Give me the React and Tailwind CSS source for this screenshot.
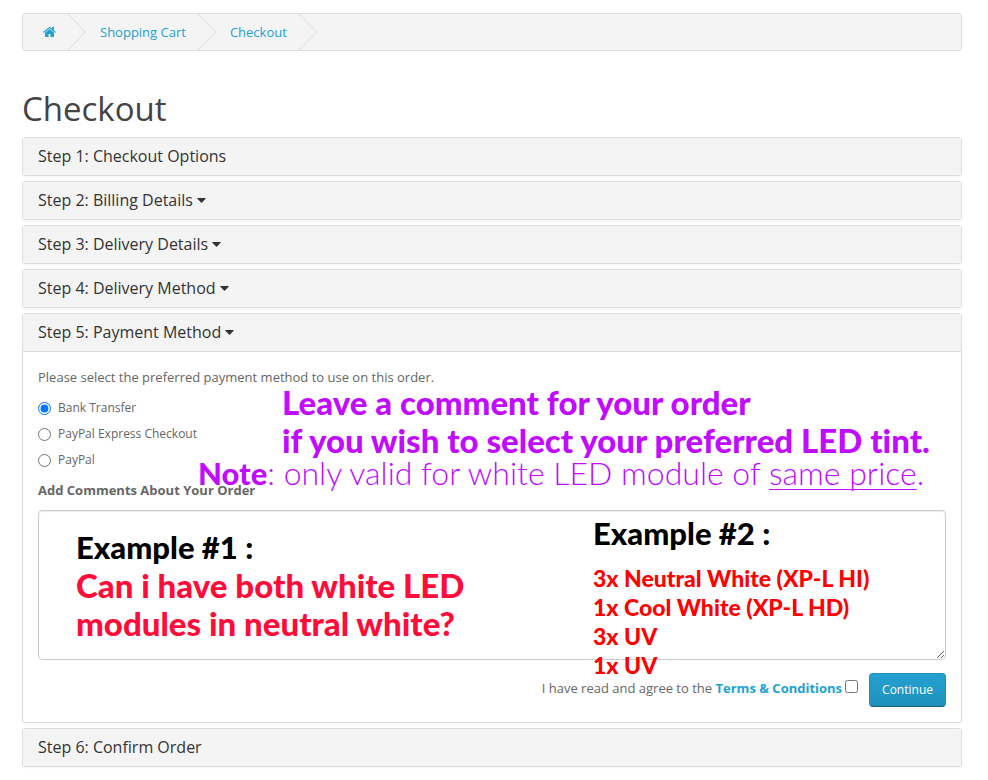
const crumbs = [
    { label: 'Home', icon: true },
    { label: 'Shopping Cart' },
    { label: 'Checkout' },
];

const paymentMethods = ['Bank Transfer', 'PayPal Express Checkout', 'PayPal'];

function HomeIcon() {
    return (
        <svg className="h-[13px] w-[13px]" viewBox="60 130 1670 1670" fill="currentColor" aria-hidden="true">
            <path d="M1472 992v480q0 26-19 45t-45 19h-384v-384h-256v384h-384q-26 0-45-19t-19-45v-480q0-1 .5-3t.5-3l575-474 575 474q1 2 1 6zm223-69l-62 74q-8 9-21 11h-3q-13 0-21-7l-692-577-692 577q-12 8-24 7-13-2-21-11l-62-74q-8-10-7-23.5t11-21.5l719-599q32-26 76-26t76 26l244 204v-195q0-14 9-23t23-9h192q14 0 23 9t9 23v408l219 182q10 8 11 21.5t-7 23.5z" />
        </svg>
    );
}

function Breadcrumb() {
    return (
        <nav className="rounded border border-[#ddd] bg-[#f4f4f4]">
            <ol className="flex gap-1 overflow-hidden">
                {crumbs.map((crumb) => (
                    <li key={crumb.label} className="relative flex h-9 items-center px-5">
                        <a href="#" aria-label={crumb.label} className="text-[13px] leading-5 text-[#23a1d1]">
                            {crumb.icon ? <HomeIcon /> : crumb.label}
                        </a>
                        <svg
                            className="absolute top-0 -right-2.5 h-9 w-[18px]"
                            viewBox="0 0 18 36"
                            fill="none"
                            stroke="#ddd"
                        >
                            <path d="M0 0 L17.5 18 L0 36" />
                        </svg>
                    </li>
                ))}
            </ol>
        </nav>
    );
}

function Panel({ title, caret, children }) {
    return (
        <section className="rounded-[3px] border border-[#ddd] bg-white shadow-xs">
            <h2 className="bg-[#f4f4f4] px-[15px] py-2.5 text-base leading-[17px] text-[#333]">
                {caret ? (
                    <a href="#" className="flex items-center gap-1">
                        {title}
                        <svg className="h-[5px] w-[9px]" viewBox="0 0 9 5" fill="currentColor" aria-hidden="true">
                            <path d="M0.6 0h7.8q.6.1.2.7L5 4.6q-.5.4-1 0L.4.7Q0 .1.6 0z" />
                        </svg>
                    </a>
                ) : (
                    title
                )}
            </h2>
            {children}
        </section>
    );
}

function PaymentForm() {
    return (
        <form className="relative border-t border-[#ddd] p-[15px] text-[13px] leading-5 text-[#666]">
            <p className="mb-[11px]">Please select the preferred payment method to use on this order.</p>

            <div className="mb-2.5 flex flex-col gap-1.5 text-xs leading-5">
                {paymentMethods.map((method, i) => (
                    <label key={method} className="flex items-center gap-[7px]">
                        <input type="radio" name="payment_method" defaultChecked={i === 0} className="size-[13px]" />
                        {method}
                    </label>
                ))}
            </div>

            <label htmlFor="comment" className="mb-2.5 block font-bold">
                Add Comments About Your Order
            </label>
            <div className="relative">
                <textarea
                    id="comment"
                    className="block h-[150px] w-full rounded border border-[#ccc] p-2 shadow-[inset_0_1px_1px_rgba(0,0,0,0.075)]"
                />
                <div className="pointer-events-none absolute top-[18px] left-[38px] font-[Lato] text-[33px] leading-[38px] font-black whitespace-nowrap text-[#ff0c3a] [font-variant-ligatures:none]">
                    <p className="text-[31px] text-black">Example #1 :</p>
                    <p>Can i have both white LED</p>
                    <p>modules in neutral white?</p>
                </div>
                <div className="pointer-events-none absolute top-1 left-[555px] font-[Lato] font-black whitespace-nowrap text-[#ff0000] [font-variant-ligatures:none]">
                    <p className="mb-3 text-[31px] leading-[38px] text-black">Example #2 :</p>
                    <ul className="text-[23px] leading-[29px]">
                        <li>3x Neutral White (XP-L HI)</li>
                        <li>1x Cool White (XP-L HD)</li>
                        <li>3x UV</li>
                        <li>1x UV</li>
                    </ul>
                </div>
            </div>

            <div className="mt-[13px] flex items-start justify-end">
                <label htmlFor="agree" className="mt-[5px]">
                    I have read and agree to the{' '}
                    <a href="#" className="font-bold text-[#23a1d1]">
                        Terms &amp; Conditions
                    </a>
                </label>
                <input id="agree" type="checkbox" className="mt-[7px] mr-[11px] ml-[3px] size-[13px]" />
                <button
                    type="button"
                    className="h-[34px] rounded border border-[#1f90bb] border-b-[#145e7a] bg-linear-to-b from-[#23a1d1] to-[#1f90bb] px-3 text-xs text-white"
                >
                    Continue
                </button>
            </div>

            <div className="pointer-events-none absolute top-[31px] left-[259px] font-[Lato] text-[33px] leading-[38px] font-black whitespace-nowrap text-[#c00cff] [font-variant-ligatures:none]">
                <p>Leave a comment for your order</p>
                <p>if you wish to select your preferred LED tint.</p>
            </div>
            <p className="pointer-events-none absolute top-[105px] left-[175px] font-[Lato] text-[32px] leading-8 font-light whitespace-nowrap text-[#c00cff]">
                <strong className="text-[31px] font-black">Note</strong>: only valid for white LED module of{' '}
                <span className="underline decoration-1 underline-offset-4 [text-decoration-skip-ink:none]">same price</span>.
            </p>
        </form>
    );
}

export default function App() {
    return (
        <main className="bg-white pt-[13px] pr-[26px] pb-[13px] pl-[22px] font-['Open_Sans',sans-serif]">
            <Breadcrumb />
            <h1 className="mt-10 mb-2.5 text-[33px] leading-9 text-[#444]">Checkout</h1>
            <div className="flex flex-col gap-[5px]">
                <Panel title="Step 1: Checkout Options" />
                <Panel title="Step 2: Billing Details" caret />
                <Panel title="Step 3: Delivery Details" caret />
                <Panel title="Step 4: Delivery Method" caret />
                <Panel title="Step 5: Payment Method" caret>
                    <PaymentForm />
                </Panel>
                <Panel title="Step 6: Confirm Order" />
            </div>
        </main>
    );
}
